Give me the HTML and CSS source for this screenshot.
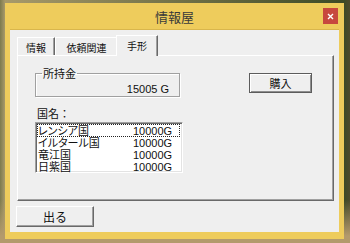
FILE: index.html
```html
<!DOCTYPE html>
<html lang="ja">
<head>
<meta charset="utf-8">
<title>情報屋</title>
<link rel="stylesheet" href="styles.css">
</head>
<body>
<div class="screen">
  <div class="window">
    <div class="titlebar">
      <span class="spacer"></span>
      <span class="title">情報屋</span>
      <button class="close" aria-label="閉じる">
        <svg width="7" height="7" viewBox="0 0 7 7"><path d="M1 1 L6 6 M6 1 L1 6" stroke="#fff" stroke-width="1.4"/></svg>
      </button>
    </div>
    <div class="client">
      <div class="tabs">
        <div class="tab tab-a">情報</div>
        <div class="tab tab-b">依頼関連</div>
        <div class="tab tab-c active">手形</div>
      </div>
      <div class="panel">
        <div class="top-row">
          <fieldset class="group">
            <legend>所持金</legend>
            <div class="amount">15005 G</div>
          </fieldset>
          <button class="btn buy">購入</button>
        </div>
        <div class="label">国名：</div>
        <div class="list">
          <div class="row focus"><span class="name">レンシア国</span><span class="price">10000G</span></div>
          <div class="row"><span class="name">イルタール国</span><span class="price">10000G</span></div>
          <div class="row"><span class="name">竜江国</span><span class="price">10000G</span></div>
          <div class="row"><span class="name">日紫国</span><span class="price">10000G</span></div>
        </div>
      </div>
      <div class="footer">
        <button class="btn exit">出る</button>
      </div>
    </div>
  </div>
</div>
</body>
</html>
```
FILE: styles.css
```css
* { box-sizing: border-box; }
html, body { margin: 0; padding: 0; }
body {
  width: 350px;
  height: 243px;
  overflow: hidden;
  font-family: "Liberation Sans", "Noto Sans CJK JP", sans-serif;
  font-size: 11px;
  color: #111;
}
.screen {
  width: 350px;
  height: 243px;
  padding: 3px 6px 4px 5px;
  background:
    linear-gradient(180deg, rgba(0,0,0,0) 0, rgba(0,0,0,0) 200px, #b39a6c 236px),
    linear-gradient(90deg, #7d7a4e 0, #a89a6a 5px, #3d4a26 344px, #4e4a2c 350px);
  background-color: #5a5330;
}
.window {
  width: 339px;
  height: 236px;
  background: #eecc5c;
  padding: 0 5px 7px 5px;
  display: flex;
  flex-direction: column;
}
.titlebar {
  height: 27px;
  display: grid;
  grid-template-columns: 1fr auto 1fr;
  align-items: center;
  border-bottom: 1px solid #d9b64c;
}
.title {
  font-family: "Noto Sans CJK JP", sans-serif;
  font-size: 13px;
  color: #3a3a3a;
  padding-top: 1px;
}
.close {
  justify-self: end;
  margin-right: 1px;
  margin-top: 5px;
  align-self: start;
  width: 15px;
  height: 16px;
  border: 0;
  padding: 0;
  background: #c7483e;
  display: flex;
  align-items: center;
  justify-content: center;
}
.client {
  flex: 1;
  background: #efefef;
  padding: 5px 5px 5px 7px;
  display: flex;
  flex-direction: column;
}
.tabs {
  height: 20px;
  display: flex;
  align-items: flex-end;
  position: relative;
  z-index: 1;
  font-family: "Noto Sans CJK JP", sans-serif;
  font-size: 10px;
}
.tab {
  height: 18px;
  border-top: 1px solid #fff;
  border-left: 1px solid #fff;
  border-right: 1px solid #696969;
  box-shadow: inset -1px 0 0 #a0a0a0;
  display: flex;
  align-items: center;
  justify-content: center;
  padding-top: 1px;
  color: #111;
}
.tab-a { width: 38px; }
.tab-b { width: 63px; }
.tab-c { width: 40px; }
.tab.active {
  height: 21px;
  margin-bottom: -1px;
  margin-left: -2px;
  width: 42px;
  background: #efefef;
  padding-bottom: 3px;
}
.panel {
  height: 146px;
  border-top: 1px solid #fff;
  border-left: 1px solid #fff;
  border-right: 1px solid #696969;
  border-bottom: 1px solid #696969;
  box-shadow: inset -1px -1px 0 #a0a0a0;
  padding: 11px 0 0 17px;
  display: flex;
  flex-direction: column;
  align-items: flex-start;
}
.top-row {
  display: flex;
  align-items: flex-start;
}
.group {
  margin: 0;
  width: 145px;
  height: 30px;
  padding: 0 10px 0 6px;
  border: 1px solid #a0a0a0;
  box-shadow: inset 1px 1px 0 #fff, 1px 1px 0 #fff;
  font-family: "Noto Sans CJK JP", sans-serif;
}
.group legend {
  padding: 0 1px;
  margin-left: 0;
  font-size: 11px;
  line-height: 12px;
}
.amount {
  text-align: right;
  font-family: "Liberation Sans", sans-serif;
  font-size: 11px;
  line-height: 12px;
  margin-top: 4px;
}
.btn {
  font-family: "Noto Sans CJK JP", sans-serif;
  font-size: 11px;
  color: #111;
  background: #efefef;
  padding: 0;
  border: 1px solid;
  border-color: #fff #696969 #696969 #fff;
  box-shadow: inset -1px -1px 0 #a0a0a0;
  border-radius: 0;
}
.buy {
  width: 63px;
  height: 20px;
  margin-left: 69px;
  margin-top: 6px;
  border: 1px solid #5c5c5c;
  box-shadow: inset 1px 1px 0 #fff, inset -1px -1px 0 #8e8e8e;
  line-height: 16px;
}
.label {
  font-family: "Noto Sans CJK JP", sans-serif;
  margin-top: 10px;
  margin-left: 2px;
  line-height: 12px;
}
.list {
  margin-top: 3px;
  width: 148px;
  height: 51px;
  background: #fff;
  border-top: 1px solid #a0a0a0;
  border-left: 1px solid #a0a0a0;
  border-right: 1px solid #fff;
  border-bottom: 1px solid #fff;
  box-shadow: inset 1px 1px 0 #696969, inset -1px -1px 0 #e3e3e3;
  padding: 2px 2px 0 1px;
  font-family: "Liberation Sans", "Noto Sans CJK JP", sans-serif;
  font-feature-settings: "palt";
}
.row {
  height: 12px;
  line-height: 12px;
  display: flex;
  border: 1px solid transparent;
  margin-top: -1px;
}
.row + .row { margin-top: 0; height: 12px; border: 0; padding-left: 1px; }
.row.focus { border: 1px dotted #222; height: 13px; }
.name { width: 95px; }
.price { font-family: "Liberation Sans", sans-serif; }
.footer {
  margin-top: 5px;
  display: flex;
}
.exit {
  width: 78px;
  height: 21px;
  margin-left: -1px;
  font-size: 12px;
}
```
